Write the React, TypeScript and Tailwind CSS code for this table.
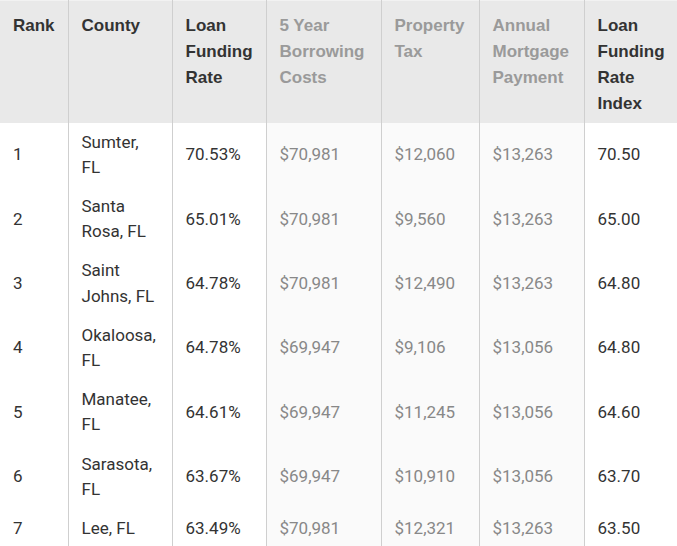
import React from 'react';

const rows = [
  { rank: '1', county: 'Sumter, FL', rate: '70.53%', borrow: '$70,981', tax: '$12,060', mortgage: '$13,263', index: '70.50' },
  { rank: '2', county: 'Santa Rosa, FL', rate: '65.01%', borrow: '$70,981', tax: '$9,560', mortgage: '$13,263', index: '65.00' },
  { rank: '3', county: 'Saint Johns, FL', rate: '64.78%', borrow: '$70,981', tax: '$12,490', mortgage: '$13,263', index: '64.80' },
  { rank: '4', county: 'Okaloosa, FL', rate: '64.78%', borrow: '$69,947', tax: '$9,106', mortgage: '$13,056', index: '64.80' },
  { rank: '5', county: 'Manatee, FL', rate: '64.61%', borrow: '$69,947', tax: '$11,245', mortgage: '$13,056', index: '64.60' },
  { rank: '6', county: 'Sarasota, FL', rate: '63.67%', borrow: '$69,947', tax: '$10,910', mortgage: '$13,056', index: '63.70' },
  { rank: '7', county: 'Lee, FL', rate: '63.49%', borrow: '$70,981', tax: '$12,321', mortgage: '$13,263', index: '63.50' },
];

const headers = [
  { label: 'Rank', w: 'w-[68px]', muted: false },
  { label: 'County', w: 'w-[104px]', muted: false },
  { label: 'Loan Funding Rate', w: 'w-[94px]', muted: false },
  { label: '5 Year Borrowing Costs', w: 'w-[115px]', muted: true },
  { label: 'Property Tax', w: 'w-[98px]', muted: true },
  { label: 'Annual Mortgage Payment', w: 'w-[105px]', muted: true },
  { label: 'Loan Funding Rate Index', w: 'w-[93px]', muted: false },
];

export default function App() {
  const cell = 'border-r border-[#cfcfcf] pl-[13px] pr-[14px] py-[7px] align-middle';
  const plain = `${cell} text-[#333]`;
  const muted = `${cell} bg-[#fafafa] text-[#888]`;

  return (
    <div className="w-[677px] h-[546px] overflow-hidden bg-white">
      <table className="table-fixed border-collapse w-[677px]">
        <thead>
          <tr className="bg-[#e9e9e9] border-t border-[#f2f2f2]">
            {headers.map((h, i) => (
              <th
                key={h.label}
                className={`${h.w} h-[122px] align-top text-left pl-[13px] pr-[6px] pt-[12px] pb-[5px] text-[17px] leading-[26px] font-bold font-['Liberation_Sans',Arial,sans-serif] ${
                  i < headers.length - 1 ? 'border-r border-[#cfcfcf]' : ''
                } ${h.muted ? 'text-[#9a9a9a]' : 'text-[#333]'}`}
              >
                {h.label}
              </th>
            ))}
          </tr>
        </thead>
        <tbody className="font-['Roboto',sans-serif] text-[17px] leading-[25.2px]">
          {rows.map((r) => (
            <tr key={r.rank}>
              <td className={plain}>{r.rank}</td>
              <td className={plain}>{r.county}</td>
              <td className={plain}>{r.rate}</td>
              <td className={muted}>{r.borrow}</td>
              <td className={muted}>{r.tax}</td>
              <td className={muted}>{r.mortgage}</td>
              <td className="pl-[13px] py-[7px] align-middle text-[#333]">{r.index}</td>
            </tr>
          ))}
        </tbody>
      </table>
    </div>
  );
}
